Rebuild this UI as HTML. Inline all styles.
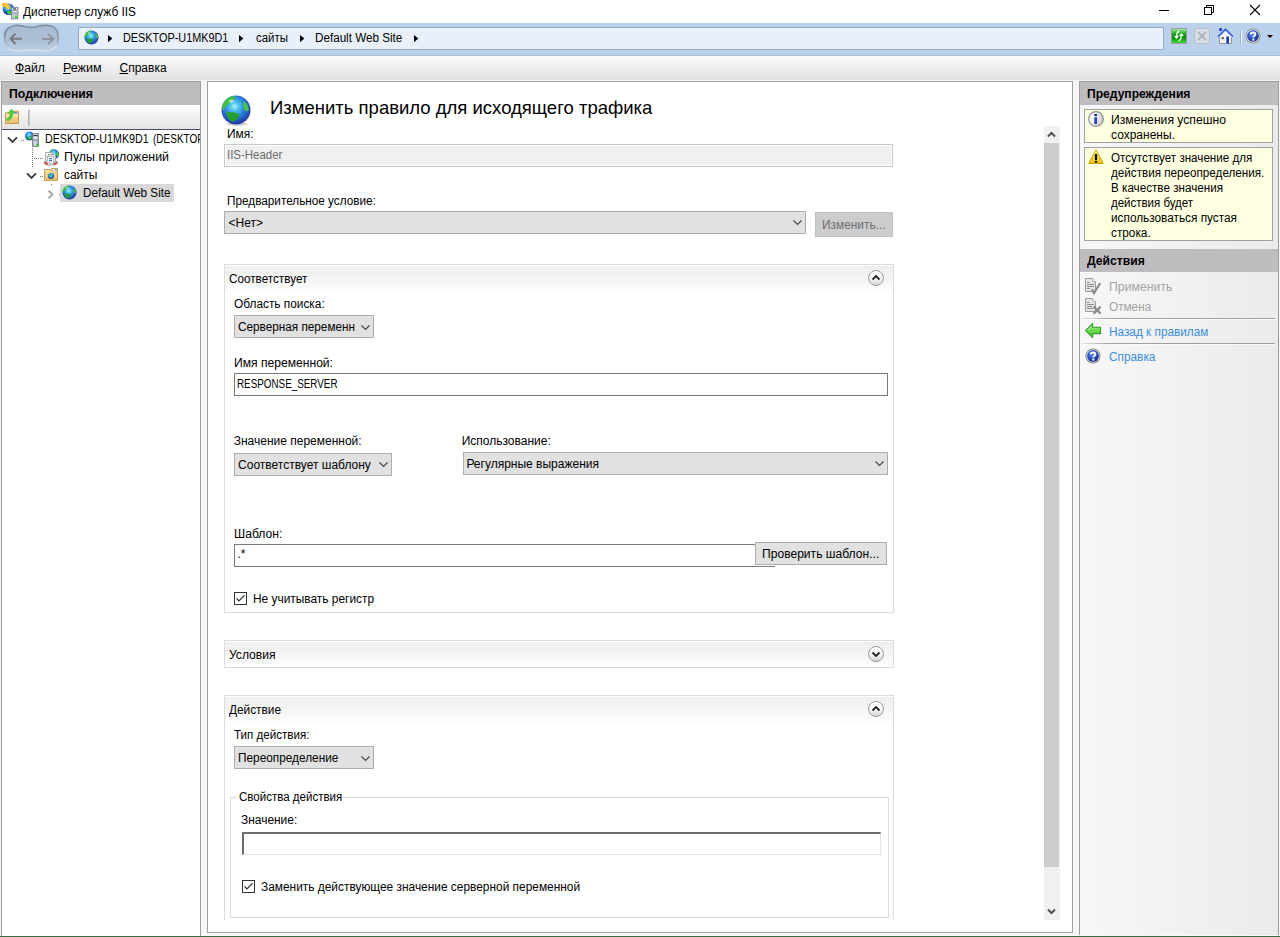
<!DOCTYPE html>
<html><head><meta charset="utf-8">
<style>
*{margin:0;padding:0;box-sizing:border-box}
html,body{width:1280px;height:937px;overflow:hidden;background:#f7f7f7;font-family:"Liberation Sans",sans-serif;font-size:12px;color:#000}
.a{position:absolute}
.t{position:absolute;white-space:nowrap;font-size:12px;line-height:15px}
svg{position:absolute;overflow:visible}
u{text-decoration:underline;text-underline-offset:1px}
</style></head><body>
<svg width="0" height="0" style="position:absolute"><defs>
<radialGradient id="gGlobe" cx="0.45" cy="0.38" r="0.62">
 <stop offset="0" stop-color="#b8f2ff"/><stop offset="0.22" stop-color="#52c8f2"/>
 <stop offset="0.6" stop-color="#2a78d6"/><stop offset="0.88" stop-color="#2448b2"/><stop offset="1" stop-color="#283a9c"/></radialGradient>
<linearGradient id="gGreen" x1="0" y1="0" x2="0" y2="1">
 <stop offset="0" stop-color="#a8f7a0"/><stop offset="0.35" stop-color="#1aa51a"/>
 <stop offset="0.6" stop-color="#078a07"/><stop offset="1" stop-color="#3ae83a"/></linearGradient>
<radialGradient id="gHelp" cx="0.4" cy="0.35" r="0.65">
 <stop offset="0" stop-color="#5d8ef0"/><stop offset="0.6" stop-color="#2a4fc0"/><stop offset="1" stop-color="#1b2f8a"/></radialGradient>
<linearGradient id="gCirc" x1="0" y1="0" x2="0" y2="1">
 <stop offset="0" stop-color="#ffffff"/><stop offset="0.55" stop-color="#f2f2f2"/><stop offset="1" stop-color="#d2d2d2"/></linearGradient>
<linearGradient id="gFolder" x1="0" y1="0" x2="0" y2="1">
 <stop offset="0" stop-color="#fbe3a8"/><stop offset="1" stop-color="#e8bf6a"/></linearGradient>
<linearGradient id="gWarn" x1="0" y1="0" x2="0" y2="1">
 <stop offset="0" stop-color="#fff27a"/><stop offset="1" stop-color="#f0c400"/></linearGradient>
<linearGradient id="gArrow" x1="0" y1="0" x2="0" y2="1">
 <stop offset="0" stop-color="#9cf27a"/><stop offset="1" stop-color="#3cc02a"/></linearGradient>
<linearGradient id="gInfo" x1="0" y1="0" x2="1" y2="0.3">
 <stop offset="0" stop-color="#ffffff"/><stop offset="0.45" stop-color="#f4f4f4"/><stop offset="1" stop-color="#cfcfcf"/></linearGradient>
<linearGradient id="gServer" x1="0" y1="0" x2="1" y2="0">
 <stop offset="0" stop-color="#8c96a6"/><stop offset="0.4" stop-color="#dfe4ea"/><stop offset="1" stop-color="#9aa3b0"/></linearGradient>
<linearGradient id="gBlobF" x1="0" y1="0" x2="0" y2="1"><stop offset="0" stop-color="#a9bbd2"/><stop offset="0.6" stop-color="#adc0d7"/><stop offset="1" stop-color="#bcd0e6"/></linearGradient>
<linearGradient id="gBlobS" x1="0" y1="0" x2="0" y2="1"><stop offset="0" stop-color="#838e9c"/><stop offset="0.5" stop-color="#949fae"/><stop offset="0.8" stop-color="#b2c2d6"/><stop offset="1" stop-color="#c8d8ea"/></linearGradient>
</defs></svg>
<div class="a" style="left:0px;top:0px;width:1280px;height:23px;background:#fff"></div>
<svg style="left:0px;top:0px;" width="24" height="24" viewBox="0 0 24 24"><circle cx="8.5" cy="9.2" r="5.8" fill="url(#gGlobe)"/>
<path d="M3.5 12 C5 14.5 8 15.5 11 15 L12 11 L9 10 Z" fill="#1736b0" opacity="0.6"/>
<path d="M6.5 11 L10 10.5 L11.5 13.5 L8.5 15 Z" fill="#2fd22f"/>
<path d="M2 3 H6 L7 4 H9.5 L10 9 L6 9 L5.5 7 L2.5 7 Z" fill="#f3b61c"/>
<path d="M4.5 4.5 L9 8.5" stroke="#ffe07a" stroke-width="1.2"/>
<rect x="11.3" y="7.3" width="6.6" height="11.6" fill="#c3c9d2" stroke="#6f7682" stroke-width="0.8"/>
<rect x="12.2" y="8.2" width="4.8" height="1.5" fill="#eef1f4"/><rect x="13" y="8.4" width="3" height="1" fill="#222"/>
<rect x="12.2" y="10.3" width="4.8" height="0.8" fill="#7d8591"/><rect x="12.2" y="11.5" width="4.8" height="1" fill="#f2f4f6"/>
<rect x="12.2" y="12.6" width="4.8" height="0.8" fill="#7d8591"/>
<rect x="15" y="15.8" width="2.3" height="2.3" fill="#35d635"/></svg>
<div class="a" style="left:1159px;top:10px;width:10px;height:1px;background:#000"></div>
<svg style="left:1203px;top:4px;" width="12" height="12" viewBox="0 0 12 12"><rect x="1.5" y="3.5" width="7" height="7" fill="none" stroke="#000"/><path d="M3.5 3.5 V1.5 H10.5 V8.5 H8.5" fill="none" stroke="#000"/></svg>
<svg style="left:1249px;top:4px;" width="12" height="12" viewBox="0 0 12 12"><path d="M1 1 L11 11 M11 1 L1 11" stroke="#000" stroke-width="1.1"/></svg>
<div class="a" style="left:0px;top:23px;width:1280px;height:33px;background:#b9d1ea"></div>
<div class="a" style="left:0px;top:55px;width:1280px;height:1px;background:#a9bfd9"></div>
<svg style="left:0px;top:22px;" width="64" height="36" viewBox="0 0 64 36"><path d="M4.5 34.5 C5 30 8 27 15 25.5 C19 25 23 26 27 27 C30 27.8 33 27.5 37.5 26.5 C42 25.2 48 25 52.5 26.5 C56 28 58 32 58.2 37 C58.5 43 57 47 53 49.5 C49 51.5 44 51.5 40 50.5 C36 49.8 30 49.8 26 50.3 C20 51.2 13 51.5 9.5 48.5 C6 46 4.2 40 4.5 34.5 Z" transform="translate(0,-22)" fill="url(#gBlobF)" stroke="url(#gBlobS)" stroke-width="1.7"/>
<path d="M9 27.5 C6 30 5 33 5 36" transform="translate(0,-22)" fill="none" stroke="#7f8a99" stroke-width="1.5"/>
<path d="M8 48 C12 51.5 19 51.5 26 50.5 C31 49.8 36 50 41 50.8 C47 51.8 53 51 57 45" transform="translate(0,-22)" fill="none" stroke="#d2e0ee" stroke-width="1.6"/>
<path d="M10.5 16.75 H22 M15.5 11.5 L10.5 16.75 L15.5 22" fill="none" stroke="#7b7b7b" stroke-width="1.9"/>
<path d="M42 17 H53.5 M48 12 L53.5 17 L48 22" fill="none" stroke="#8d949e" stroke-width="1.9"/></svg>
<div class="a" style="left:78px;top:27px;width:1086px;height:23px;background:#e9f0f9;border:1px solid #98abc2"></div>
<svg style="left:84px;top:30px;" width="15" height="15" viewBox="0 0 15 15"><circle cx="7.5" cy="7.5" r="7.0" fill="url(#gGlobe)"/><path d="M6.33 0.47 C4.22 0.94 1.88 2.34 0.94 4.69 C0.47 6.09 0.70 7.03 1.17 7.73 C2.11 6.56 2.58 5.16 3.75 4.45 C4.69 3.75 5.62 2.81 6.80 2.11 C7.27 1.41 7.03 0.70 6.33 0.47 Z" fill="#3cc23c"/><path d="M2.81 8.67 C4.45 8.20 7.03 8.44 9.14 9.61 C8.91 11.25 7.73 12.89 5.86 13.36 C4.69 13.12 3.75 12.19 3.28 11.02 C3.05 10.08 2.81 9.38 2.81 8.67 Z" fill="#22a02c"/><path d="M11.48 3.28 C12.89 4.22 13.83 5.62 13.88 7.50 C13.36 8.44 12.19 8.20 11.62 7.03 C11.25 5.86 11.25 4.45 11.48 3.28 Z" fill="#48c83c"/><ellipse cx="5.16" cy="3.05" rx="1.41" ry="0.84" fill="#fff" opacity="0.55"/></svg>
<svg style="left:108px;top:35px;" width="5" height="8" viewBox="0 0 5 8"><path d="M0 0 L4.3 3.6 L0 7.2 Z" fill="#000"/></svg>
<svg style="left:239px;top:35px;" width="5" height="8" viewBox="0 0 5 8"><path d="M0 0 L4.3 3.6 L0 7.2 Z" fill="#000"/></svg>
<svg style="left:300px;top:35px;" width="5" height="8" viewBox="0 0 5 8"><path d="M0 0 L4.3 3.6 L0 7.2 Z" fill="#000"/></svg>
<svg style="left:414px;top:35px;" width="5" height="8" viewBox="0 0 5 8"><path d="M0 0 L4.3 3.6 L0 7.2 Z" fill="#000"/></svg>
<svg style="left:1171px;top:28px;" width="16" height="16" viewBox="0 0 16 16"><rect x="0.5" y="0.5" width="15" height="15" fill="url(#gGreen)" stroke="#a39aa6"/>
<path d="M8 2.5 C5.5 3 5 5 5.2 8 L3 8 L5.5 11 L8 8 L6.5 8 C6.5 6 7 4.5 8.5 4 Z" fill="#fff"/>
<path d="M7.5 13.5 C10 13 10.8 11 10.7 8 L12.8 8 L10.4 5 L8 8 L9.4 8 C9.4 10 9 11.5 7.5 12 Z" fill="#fff"/></svg>
<svg style="left:1194px;top:28px;" width="16" height="16" viewBox="0 0 16 16"><rect x="0.5" y="0.5" width="15" height="15" fill="#d5dde8" stroke="#b9bec6"/>
<path d="M4.2 4.2 L11.8 11.8 M11.8 4.2 L4.2 11.8" stroke="#b2b2b2" stroke-width="1.9"/></svg>
<svg style="left:1217px;top:27px;" width="17" height="17" viewBox="0 0 17 17"><path d="M2.5 16.5 V9.5 L8.5 3.2 L14.5 9.5 V16.5 Z" fill="#eceef2" stroke="#8e96a3"/>
<path d="M4 16 V10 L8.5 5 L13 10 V16 Z" fill="#f6f7f9"/>
<path d="M1 9.8 L8.5 2.2 L16 9.8" fill="none" stroke="#2f55e0" stroke-width="1.5"/>
<path d="M1.8 9.2 L8.5 3.4 L15.2 9.2" fill="none" stroke="#fff" stroke-width="0.6" transform="translate(0,1)"/>
<rect x="2.3" y="1" width="2.6" height="3" fill="#1f3fd0"/>
<rect x="4.2" y="9.6" width="3" height="3" fill="#e0e0e0"/><rect x="4.8" y="10.2" width="1.9" height="1.9" fill="#444"/>
<rect x="9.3" y="9.5" width="2.7" height="7" fill="#1f3fbf"/></svg>
<div class="a" style="left:1241px;top:30px;width:1px;height:14px;background:#f3f6fa;border-left:0"></div>
<div class="a" style="left:1240px;top:30px;width:1px;height:14px;background:#9fb0c6"></div>
<svg style="left:1245px;top:28px;" width="16" height="16" viewBox="0 0 16 16"><circle cx="8" cy="8" r="7.5" fill="#8a8a8a"/><circle cx="8" cy="8" r="6.7" fill="#d8d8d8"/>
<circle cx="8" cy="8" r="5.8" fill="url(#gHelp)"/>
<path d="M5.8 6.2 C5.8 4 10.4 3.8 10.4 6.2 C10.4 7.8 8.3 8 8.3 9.6" fill="none" stroke="#fff" stroke-width="1.9"/>
<rect x="7.3" y="10.6" width="2" height="2" fill="#fff"/></svg>
<svg style="left:1267px;top:35px;" width="6" height="3" viewBox="0 0 6 3"><path d="M0 0 H6 L3 3 Z" fill="#000"/></svg>
<div class="a" style="left:0px;top:56px;width:1280px;height:24px;background:linear-gradient(#fbfbfb,#e2e1e3)"></div>
<div class="a" style="left:0px;top:80px;width:1280px;height:1px;background:#f4f4f4"></div>
<div class="a" style="left:0px;top:81px;width:1280px;height:855px;background:#f7f7f7"></div>
<div class="a" style="left:1px;top:81px;width:200px;height:855px;background:#fff;border:1px solid #9c9c9c;border-bottom:none"></div>
<div class="a" style="left:2px;top:82px;width:198px;height:23px;background:#bebcbf"></div>
<div class="a" style="left:2px;top:105px;width:198px;height:24px;background:linear-gradient(#fdfdfd,#e3e3e3)"></div>
<div class="a" style="left:2px;top:129px;width:198px;height:1px;background:#4b4d6b"></div>
<svg style="left:5px;top:109px;" width="15" height="16" viewBox="0 0 15 16"><path d="M0.5 3.8 H7 L8 2.2 H13.5 V14.5 H0.5 Z" fill="url(#gFolder)" stroke="#c49a50"/>
<rect x="1" y="6" width="12" height="1.2" fill="#fff2b8"/>
<rect x="9.5" y="3" width="2.6" height="1.4" fill="#3a8ee6"/>
<path d="M6.2 0.2 L9.8 3.6 L8 3.9 C8 7 6.5 9.5 3.2 11.8 L1.6 10.4 C4.2 8.6 5.2 6.5 5.3 4 L3.4 4.1 Z" fill="#44d444" stroke="#2a9a2a" stroke-width="0.5"/></svg>
<div class="a" style="left:28px;top:110px;width:2px;height:16px;background:linear-gradient(90deg,#a9a9a9,#d6d6c4)"></div>
<svg style="left:7px;top:136px;" width="11" height="8" viewBox="0 0 11 8"><path d="M1 1.3 L5.5 5.8 L10 1.3" fill="none" stroke="#3c3c3c" stroke-width="1.9"/></svg>
<div class="a" style="left:21px;top:140px;width:4px;height:1px;background:repeating-linear-gradient(90deg,#777 0 1px,transparent 1px 2px)"></div>
<svg style="left:25px;top:131px;" width="15" height="16" viewBox="0 0 15 16"><circle cx="4.5" cy="5" r="4.5" fill="url(#gGlobe)"/><path d="M2 6 L5 5 L7 8 L4 9 Z" fill="#31c431"/>
<rect x="7.5" y="2.5" width="6" height="13" fill="url(#gServer)" stroke="#6f7888" stroke-width="0.8"/>
<rect x="8.5" y="4" width="4" height="1.1" fill="#333"/><rect x="8.5" y="6.5" width="4" height="1" fill="#fff"/>
<rect x="8.5" y="8.5" width="4" height="1" fill="#777"/><rect x="11" y="13" width="2" height="2" fill="#3ad63a"/></svg>
<div class="a" style="left:32px;top:148px;width:1px;height:19px;background:repeating-linear-gradient(180deg,#777 0 1px,transparent 1px 2px)"></div>
<div class="a" style="left:33px;top:158px;width:10px;height:1px;background:repeating-linear-gradient(90deg,transparent 0 1px,#777 1px 2px)"></div>
<svg style="left:43px;top:149px;" width="17" height="17" viewBox="0 0 17 17"><circle cx="11" cy="5.2" r="5" fill="url(#gGlobe)"/>
<path d="M14 2.5 C15.5 3.5 16 5 15.8 7 L14 8 L13.2 5 Z" fill="#3ccc3a"/><path d="M7 1.5 C8 0.8 9.5 0.5 10.5 0.6 L9 2.5 Z" fill="#3ccc3a"/>
<ellipse cx="7.8" cy="13.6" rx="6.8" ry="2.6" fill="#f4f4f4" stroke="#9a9a9a" stroke-width="0.9"/>
<path d="M1.2 13 C1.5 15 3 16 4.5 16.2 L5 14.2 C3.8 14 3 13.6 2.8 12.8 Z" fill="#e03a2a"/>
<path d="M14.4 13 C14.1 15 12.6 16 11 16.2 L10.6 14.2 C11.8 14 12.6 13.6 12.8 12.8 Z" fill="#e03a2a"/>
<rect x="2.5" y="3.5" width="6.5" height="9" fill="#fbfbf2" stroke="#a6a6a6" stroke-width="0.9"/>
<rect x="5.5" y="5.5" width="7" height="8" fill="#f6f6f6" stroke="#a6a6a6" stroke-width="0.9"/>
<rect x="4.2" y="7.2" width="6.6" height="7" fill="#ffffff" stroke="#9a9a9a" stroke-width="0.9"/>
<path d="M6 9.6 H9 M6 11.6 H9" stroke="#2f7ad8" stroke-width="1.1"/></svg>
<svg style="left:26px;top:172px;" width="11" height="8" viewBox="0 0 11 8"><path d="M1 1.3 L5.5 5.8 L10 1.3" fill="none" stroke="#3c3c3c" stroke-width="1.9"/></svg>
<div class="a" style="left:40px;top:176px;width:4px;height:1px;background:repeating-linear-gradient(90deg,#777 0 1px,transparent 1px 2px)"></div>
<svg style="left:44px;top:167px;" width="15" height="15" viewBox="0 0 15 15"><path d="M0.5 2.5 H6.5 L7.5 1.5 H13.5 V13.5 H0.5 Z" fill="url(#gFolder)" stroke="#c9a35a"/>
<path d="M7.5 1.5 V4 H13.5" fill="none" stroke="#d4b06a" stroke-width="0.8"/>
<rect x="9" y="2.2" width="3.5" height="1.2" fill="#fff"/><rect x="11" y="2.2" width="1.8" height="1.2" fill="#3a8ee6"/>
<circle cx="7" cy="9" r="3.1" fill="url(#gGlobe)"/><path d="M5 8 L6.5 7 L7.5 8.5 L6 9.5 Z M7 10.5 L9 10 L8.5 12 Z" fill="#31c431"/></svg>
<div class="a" style="left:51px;top:184px;width:1px;height:1px;background:#777"></div>
<div class="a" style="left:60px;top:184px;width:114px;height:18px;background:#d9d9d9"></div>
<svg style="left:47px;top:190px;" width="8" height="9" viewBox="0 0 8 9"><path d="M1.5 0.8 L5.5 4.5 L1.5 8.2" fill="none" stroke="#a8a8a8" stroke-width="2"/></svg>
<div class="a" style="left:59px;top:194px;width:1px;height:1px;background:#777"></div>
<svg style="left:62px;top:185px;" width="15" height="15" viewBox="0 0 15 15"><circle cx="7.5" cy="7.5" r="7.0" fill="url(#gGlobe)"/><path d="M6.33 0.47 C4.22 0.94 1.88 2.34 0.94 4.69 C0.47 6.09 0.70 7.03 1.17 7.73 C2.11 6.56 2.58 5.16 3.75 4.45 C4.69 3.75 5.62 2.81 6.80 2.11 C7.27 1.41 7.03 0.70 6.33 0.47 Z" fill="#3cc23c"/><path d="M2.81 8.67 C4.45 8.20 7.03 8.44 9.14 9.61 C8.91 11.25 7.73 12.89 5.86 13.36 C4.69 13.12 3.75 12.19 3.28 11.02 C3.05 10.08 2.81 9.38 2.81 8.67 Z" fill="#22a02c"/><path d="M11.48 3.28 C12.89 4.22 13.83 5.62 13.88 7.50 C13.36 8.44 12.19 8.20 11.62 7.03 C11.25 5.86 11.25 4.45 11.48 3.28 Z" fill="#48c83c"/><ellipse cx="5.16" cy="3.05" rx="1.41" ry="0.84" fill="#fff" opacity="0.55"/></svg>
<div class="a" style="left:207px;top:81px;width:866px;height:852px;background:#fff;border:1px solid #a0a0a0"></div>
<svg style="left:221px;top:95px;" width="30" height="32" viewBox="0 0 30 32"><ellipse cx="16.0" cy="29" rx="10.5" ry="1.7999999999999998" fill="#000" opacity="0.18"/><circle cx="15.0" cy="15.0" r="14.5" fill="url(#gGlobe)"/><path d="M12.66 0.94 C8.44 1.88 3.75 4.69 1.88 9.38 C0.94 12.19 1.41 14.06 2.34 15.47 C4.22 13.12 5.16 10.31 7.50 8.91 C9.38 7.50 11.25 5.62 13.59 4.22 C14.53 2.81 14.06 1.41 12.66 0.94 Z" fill="#3cc23c"/><path d="M5.62 17.34 C8.91 16.41 14.06 16.88 18.28 19.22 C17.81 22.50 15.47 25.78 11.72 26.72 C9.38 26.25 7.50 24.38 6.56 22.03 C6.09 20.16 5.62 18.75 5.62 17.34 Z" fill="#22a02c"/><path d="M22.97 6.56 C25.78 8.44 27.66 11.25 27.75 15.00 C26.72 16.88 24.38 16.41 23.25 14.06 C22.50 11.72 22.50 8.91 22.97 6.56 Z" fill="#48c83c"/><ellipse cx="10.31" cy="6.09" rx="2.81" ry="1.69" fill="#fff" opacity="0.55"/></svg>
<div class="a" style="left:224px;top:144px;width:669px;height:23px;border:1px solid #c8c8c8;background:#f0f0f0;box-shadow:inset 0 0 0 1px #fff"></div>
<div class="a" style="left:224px;top:211px;width:582px;height:23px;border:1px solid #adadad;background:#e1e1e1"></div>
<svg style="left:793px;top:220px;" width="9" height="6" viewBox="0 0 9 6"><path d="M0.5 0.5 L4.5 4.5 L8.5 0.5" fill="none" stroke="#444" stroke-width="1.15"/></svg>
<div class="a" style="left:815px;top:212px;width:78px;height:25px;border:1px solid #c0c0c0;background:#cccccc"></div>
<div class="a" style="left:224px;top:264px;width:670px;height:349px;border:1px solid #dcdcdc;background:#fff"></div>
<div class="a" style="left:225px;top:265px;width:668px;height:27px;background:linear-gradient(#fff 0,#fff 1px,#efefef 1px,#f3f3f3 40%,#fafafa 85%,#fff 100%)"></div>
<svg style="left:868px;top:270px;" width="16" height="16" viewBox="0 0 16 16"><circle cx="8" cy="8" r="7.5" fill="url(#gCirc)" stroke="#9c9c9c"/><path d="M4.5 9.5 L8 6 L11.5 9.5" fill="none" stroke="#222" stroke-width="1.8"/></svg>
<div class="a" style="left:234px;top:315px;width:140px;height:23px;border:1px solid #adadad;background:#e1e1e1"></div>
<svg style="left:361px;top:325px;" width="9" height="6" viewBox="0 0 9 6"><path d="M0.5 0.5 L4.5 4.5 L8.5 0.5" fill="none" stroke="#444" stroke-width="1.15"/></svg>
<div class="a" style="left:234px;top:373px;width:654px;height:23px;border:1px solid #7a7a7a;background:#fff"></div>
<div class="a" style="left:234px;top:453px;width:158px;height:23px;border:1px solid #adadad;background:#e1e1e1"></div>
<svg style="left:379px;top:462px;" width="9" height="6" viewBox="0 0 9 6"><path d="M0.5 0.5 L4.5 4.5 L8.5 0.5" fill="none" stroke="#444" stroke-width="1.15"/></svg>
<div class="a" style="left:463px;top:452px;width:425px;height:23px;border:1px solid #adadad;background:#e1e1e1"></div>
<svg style="left:875px;top:461px;" width="9" height="6" viewBox="0 0 9 6"><path d="M0.5 0.5 L4.5 4.5 L8.5 0.5" fill="none" stroke="#444" stroke-width="1.15"/></svg>
<div class="a" style="left:234px;top:544px;width:541px;height:23px;border:1px solid #7a7a7a;border-right:none;background:#fff"></div>
<div class="a" style="left:755px;top:542px;width:132px;height:23px;border:1px solid #adadad;background:#e1e1e1"></div>
<svg style="left:234px;top:592px;" width="13" height="13" viewBox="0 0 13 13"><rect x="0.5" y="0.5" width="12" height="12" fill="#fff" stroke="#333"/><path d="M2.5 6.5 L5 9 L10.5 3.2" fill="none" stroke="#333" stroke-width="1.2"/></svg>
<div class="a" style="left:224px;top:640px;width:670px;height:28px;border:1px solid #dcdcdc;background:#fff"></div>
<div class="a" style="left:225px;top:641px;width:668px;height:26px;background:linear-gradient(#fff 0,#fff 1px,#efefef 1px,#f3f3f3 40%,#fafafa 85%,#fff 100%)"></div>
<svg style="left:868px;top:646px;" width="16" height="16" viewBox="0 0 16 16"><circle cx="8" cy="8" r="7.5" fill="url(#gCirc)" stroke="#9c9c9c"/><path d="M4.5 6.5 L8 10 L11.5 6.5" fill="none" stroke="#222" stroke-width="1.8"/></svg>
<div class="a" style="left:224px;top:695px;width:670px;height:226px;border:1px solid #dcdcdc;background:#fff;border-bottom:none"></div>
<div class="a" style="left:225px;top:696px;width:668px;height:27px;background:linear-gradient(#fff 0,#fff 1px,#efefef 1px,#f3f3f3 40%,#fafafa 85%,#fff 100%)"></div>
<svg style="left:868px;top:701px;" width="16" height="16" viewBox="0 0 16 16"><circle cx="8" cy="8" r="7.5" fill="url(#gCirc)" stroke="#9c9c9c"/><path d="M4.5 9.5 L8 6 L11.5 9.5" fill="none" stroke="#222" stroke-width="1.8"/></svg>
<div class="a" style="left:234px;top:746px;width:140px;height:23px;border:1px solid #adadad;background:#e1e1e1"></div>
<svg style="left:361px;top:756px;" width="9" height="6" viewBox="0 0 9 6"><path d="M0.5 0.5 L4.5 4.5 L8.5 0.5" fill="none" stroke="#444" stroke-width="1.15"/></svg>
<div class="a" style="left:230px;top:797px;width:659px;height:121px;border:1px solid #dcdcdc"></div>
<div class="a" style="left:236px;top:792px;width:107px;height:10px;background:#fff"></div>
<div class="a" style="left:242px;top:832px;width:639px;height:23px;border:1px solid #e3e3e3;border-top:2px solid #6e6e6e;border-left:2px solid #6e6e6e;background:#fff"></div>
<svg style="left:242px;top:880px;" width="13" height="13" viewBox="0 0 13 13"><rect x="0.5" y="0.5" width="12" height="12" fill="#fff" stroke="#333"/><path d="M2.5 6.5 L5 9 L10.5 3.2" fill="none" stroke="#333" stroke-width="1.2"/></svg>
<div class="a" style="left:208px;top:920px;width:864px;height:12px;background:#fff"></div>
<div class="a" style="left:1044px;top:126px;width:16px;height:794px;background:#f0f0f0"></div>
<div class="a" style="left:1044px;top:143px;width:15px;height:724px;background:#cdcdcd"></div>
<svg style="left:1047px;top:131px;" width="9" height="7" viewBox="0 0 9 7"><path d="M1 5.5 L4.5 2 L8 5.5" fill="none" stroke="#505050" stroke-width="2"/></svg>
<svg style="left:1047px;top:908px;" width="9" height="7" viewBox="0 0 9 7"><path d="M1 1.5 L4.5 5 L8 1.5" fill="none" stroke="#505050" stroke-width="2"/></svg>
<div class="a" style="left:1079px;top:81px;width:200px;height:854px;background:linear-gradient(90deg,#f7f7f7,#ebebeb);border:1px solid #9c9c9c;border-bottom:none"></div>
<div class="a" style="left:1080px;top:82px;width:198px;height:23px;background:#bebcbf"></div>
<div class="a" style="left:1084px;top:109px;width:189px;height:34px;background:#ffffe1;border:1px solid #a0a0a0"></div>
<div class="a" style="left:1084px;top:147px;width:189px;height:94px;background:#ffffe1;border:1px solid #a0a0a0"></div>
<svg style="left:1088px;top:111px;" width="16" height="16" viewBox="0 0 16 16"><circle cx="8" cy="8" r="7.3" fill="url(#gInfo)" stroke="#8a8a8a" stroke-width="1.2"/>
<rect x="6.3" y="6.2" width="2.7" height="6.8" fill="#2640c0"/><rect x="6.3" y="3" width="2.7" height="2" fill="#142a9a"/></svg>
<svg style="left:1088px;top:149px;" width="16" height="16" viewBox="0 0 16 16"><path d="M8 0.9 L15.3 14.5 L0.7 14.5 Z" fill="url(#gWarn)" stroke="#c9a100" stroke-width="1" stroke-linejoin="round"/>
<rect x="6.9" y="5" width="2.2" height="6" fill="#111"/><rect x="6.9" y="11.8" width="2.2" height="2" fill="#111"/></svg>
<div class="a" style="left:1080px;top:249px;width:198px;height:23px;background:#bebcbf"></div>
<svg style="left:1085px;top:278px;" width="17" height="17" viewBox="0 0 17 17"><path d="M0.5 0.5 H7.5 L10.5 3.5 V13.5 H0.5 Z" fill="#e6e6e6" stroke="#9a9a9a"/>
<path d="M7.5 0.5 V3.5 H10.5" fill="#fafafa" stroke="#b0b0b0" stroke-width="0.8"/>
<path d="M2 4.5 H4.5 M2 6.5 H9 M2 8.5 H9 M2 10.5 H5" stroke="#8c8c8c"/>
<path d="M7 11.3 L9 15 L15.2 5.2" fill="none" stroke="#8a8a8a" stroke-width="2.2"/></svg>
<svg style="left:1085px;top:298px;" width="17" height="17" viewBox="0 0 17 17"><path d="M0.5 0.5 H7.5 L10.5 3.5 V13.5 H0.5 Z" fill="#e6e6e6" stroke="#9a9a9a"/>
<path d="M7.5 0.5 V3.5 H10.5" fill="#fafafa" stroke="#b0b0b0" stroke-width="0.8"/>
<path d="M2 4.5 H4.5 M2 6.5 H9 M2 8.5 H7 M2 10.5 H8" stroke="#8c8c8c"/>
<path d="M8.6 8.6 L15.6 15.6 M15.6 8.6 L8.6 15.6" stroke="#8a8a8a" stroke-width="2.2"/></svg>
<div class="a" style="left:1082px;top:318px;width:193px;height:1px;background:linear-gradient(90deg,#e0e0e0,#a0a0a0 15%,#a0a0a0)"></div>
<div class="a" style="left:1082px;top:319px;width:193px;height:1px;background:#fafafa"></div>
<svg style="left:1085px;top:323px;" width="17" height="16" viewBox="0 0 17 16"><path d="M0.6 7.6 L7.6 0.6 V4.3 H15.5 V10.6 H7.6 V14.6 Z" fill="url(#gArrow)" stroke="#2e9f22" stroke-width="1.1" stroke-linejoin="round"/>
<path d="M2.4 7.6 L6.6 3.4" stroke="#c8f8b8" stroke-width="0.8"/></svg>
<div class="a" style="left:1082px;top:343px;width:193px;height:1px;background:linear-gradient(90deg,#e0e0e0,#a0a0a0 15%,#a0a0a0)"></div>
<div class="a" style="left:1082px;top:344px;width:193px;height:1px;background:#fafafa"></div>
<svg style="left:1085px;top:348px;" width="16" height="16" viewBox="0 0 16 16"><circle cx="8" cy="8" r="7.6" fill="#7a7a7a"/><circle cx="8" cy="8" r="6.8" fill="#dcdcdc"/>
<circle cx="8" cy="8" r="5.9" fill="url(#gHelp)"/>
<path d="M5.8 6.2 C5.8 4 10.4 3.8 10.4 6.2 C10.4 7.8 8.3 8 8.3 9.6" fill="none" stroke="#fff" stroke-width="1.9"/>
<rect x="7.3" y="10.6" width="2" height="2" fill="#fff"/></svg>
<div class="a" style="left:0px;top:936px;width:1280px;height:1px;background:#3b6b40"></div>
<div class="t" style="left:22.5px;top:5px;transform:scaleX(0.9893);transform-origin:0 0;">Диспетчер служб IIS</div>
<div class="t" style="left:122.7px;top:31px;transform:scaleX(0.9048);transform-origin:0 0;">DESKTOP-U1MK9D1</div>
<div class="t" style="left:255.5px;top:31px;transform:scaleX(0.9522);transform-origin:0 0;">сайты</div>
<div class="t" style="left:314.7px;top:31px;transform:scaleX(0.9719);transform-origin:0 0;">Default Web Site</div>
<div class="t" style="left:14.5px;top:61px;transform:scaleX(1.0079);transform-origin:0 0;"><u>Ф</u>айл</div>
<div class="t" style="left:62.5px;top:61px;transform:scaleX(1.0428);transform-origin:0 0;"><u>Р</u>ежим</div>
<div class="t" style="left:119.5px;top:61px;"><u>С</u>правка</div>
<div class="t" style="left:9.0px;top:87px;font-weight:bold;transform:scaleX(1.0213);transform-origin:0 0;">Подключения</div>
<div class="t" style="left:45.1px;top:132px;transform:scaleX(0.8894);transform-origin:0 0;">DESKTOP-U1MK9D1</div>
<div class="a" style="left:0;top:132px;width:200px;height:16px;overflow:hidden"><div class="t" style="left:153.1px;top:0;transform:scaleX(0.8350);transform-origin:0 0;">(DESKTOP-U1MK9D1\admin)</div></div>
<div class="t" style="left:64.0px;top:150px;transform:scaleX(1.0334);transform-origin:0 0;">Пулы приложений</div>
<div class="t" style="left:64.0px;top:168px;transform:scaleX(0.9940);transform-origin:0 0;">сайты</div>
<div class="t" style="left:83.0px;top:186px;transform:scaleX(0.9741);transform-origin:0 0;">Default Web Site</div>
<div class="t" style="left:1086.5px;top:87px;font-weight:bold;transform:scaleX(1.0079);transform-origin:0 0;">Предупреждения</div>
<div class="t" style="left:1111.0px;top:113px;transform:scaleX(1.0125);transform-origin:0 0;">Изменения успешно</div>
<div class="t" style="left:1111.0px;top:128px;">сохранены.</div>
<div class="t" style="left:1111.0px;top:151px;transform:scaleX(0.9681);transform-origin:0 0;">Отсутствует значение для</div>
<div class="t" style="left:1111.0px;top:166px;transform:scaleX(0.9722);transform-origin:0 0;">действия переопределения.</div>
<div class="t" style="left:1111.0px;top:181px;transform:scaleX(0.9719);transform-origin:0 0;">В качестве значения</div>
<div class="t" style="left:1111.0px;top:196px;transform:scaleX(0.9571);transform-origin:0 0;">действия будет</div>
<div class="t" style="left:1111.0px;top:211px;transform:scaleX(0.9840);transform-origin:0 0;">использоваться пустая</div>
<div class="t" style="left:1111.0px;top:226px;transform:scaleX(0.9833);transform-origin:0 0;">строка.</div>
<div class="t" style="left:1086.5px;top:254px;font-weight:bold;transform:scaleX(1.0120);transform-origin:0 0;">Действия</div>
<div class="t" style="left:1108.9px;top:280px;color:#a3a3a3;transform:scaleX(1.0239);transform-origin:0 0;">Применить</div>
<div class="t" style="left:1108.9px;top:300px;color:#a3a3a3;transform:scaleX(0.9800);transform-origin:0 0;">Отмена</div>
<div class="t" style="left:1108.9px;top:325px;color:#3b8ddb;transform:scaleX(0.9826);transform-origin:0 0;">Назад к правилам</div>
<div class="t" style="left:1108.9px;top:350px;color:#3b8ddb;transform:scaleX(0.9856);transform-origin:0 0;">Справка</div>
<div class="t" style="left:270.0px;top:98px;font-size:18.5px;line-height:20px;">Изменить правило для исходящего трафика</div>
<div class="t" style="left:227.0px;top:127px;transform:scaleX(0.9918);transform-origin:0 0;">Имя:</div>
<div class="t" style="left:227.1px;top:148px;color:#6d6d6d;transform:scaleX(0.9547);transform-origin:0 0;">IIS-Header</div>
<div class="t" style="left:227.1px;top:194px;transform:scaleX(0.9798);transform-origin:0 0;">Предварительное условие:</div>
<div class="t" style="left:228.5px;top:216px;">&lt;Нет&gt;</div>
<div class="t" style="left:822.0px;top:217.5px;color:#6d6d6d;transform:scaleX(0.9900);transform-origin:0 0;">Изменить...</div>
<div class="t" style="left:229.1px;top:272px;transform:scaleX(0.9754);transform-origin:0 0;">Соответствует</div>
<div class="t" style="left:234.3px;top:297px;transform:scaleX(0.9877);transform-origin:0 0;">Область поиска:</div>
<div class="t" style="left:238.0px;top:320px;transform:scaleX(0.9796);transform-origin:0 0;">Серверная переменн</div>
<div class="t" style="left:234.0px;top:356px;transform:scaleX(1.0089);transform-origin:0 0;">Имя переменной:</div>
<div class="t" style="left:237.0px;top:377px;transform:scaleX(0.8204);transform-origin:0 0;">RESPONSE_SERVER</div>
<div class="t" style="left:233.7px;top:434px;">Значение переменной:</div>
<div class="t" style="left:238.1px;top:458px;">Соответствует шаблону</div>
<div class="t" style="left:461.7px;top:434px;">Использование:</div>
<div class="t" style="left:466.4px;top:457px;">Регулярные выражения</div>
<div class="t" style="left:234.0px;top:527px;transform:scaleX(1.0129);transform-origin:0 0;">Шаблон:</div>
<div class="t" style="left:237.5px;top:547px;">.*</div>
<div class="t" style="left:762.0px;top:547px;transform:scaleX(1.0071);transform-origin:0 0;">Проверить шаблон...</div>
<div class="t" style="left:253.2px;top:592px;transform:scaleX(0.9915);transform-origin:0 0;">Не учитывать регистр</div>
<div class="t" style="left:228.5px;top:648px;transform:scaleX(1.0061);transform-origin:0 0;">Условия</div>
<div class="t" style="left:228.5px;top:703px;transform:scaleX(0.9855);transform-origin:0 0;">Действие</div>
<div class="t" style="left:233.8px;top:728px;transform:scaleX(0.9664);transform-origin:0 0;">Тип действия:</div>
<div class="t" style="left:238.1px;top:751px;transform:scaleX(0.9857);transform-origin:0 0;">Переопределение</div>
<div class="t" style="left:239.0px;top:790px;transform:scaleX(0.9606);transform-origin:0 0;">Свойства действия</div>
<div class="t" style="left:240.5px;top:813px;transform:scaleX(0.9945);transform-origin:0 0;">Значение:</div>
<div class="t" style="left:260.7px;top:880px;transform:scaleX(0.9915);transform-origin:0 0;">Заменить действующее значение серверной переменной</div>
</body></html>
